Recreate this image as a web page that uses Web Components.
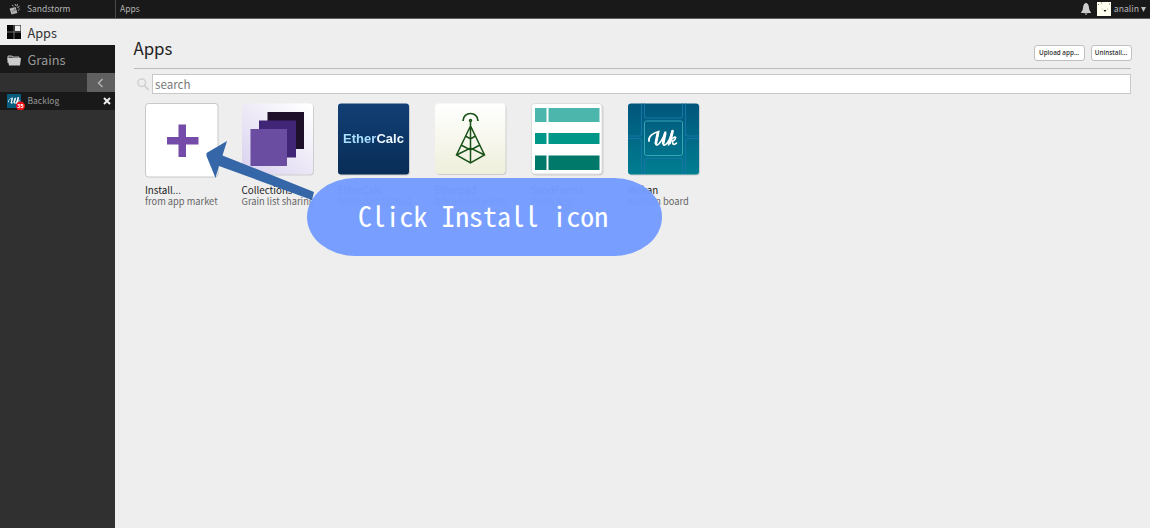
<!DOCTYPE html>
<html lang="en"><head><meta charset="utf-8"><title>Sandstorm</title>
<style>html,body{margin:0;height:100%;overflow:hidden}body{font-family:"Noto Sans CJK JP","Noto Sans",sans-serif;background:#eee}</style></head>
<body><sand-shell></sand-shell>
<script>
const define=(name,html)=>customElements.define(name,class extends HTMLElement{
 constructor(){super();const t=document.createElement('template');t.innerHTML=html;this.attachShadow({mode:'open'}).append(t.content.cloneNode(true));}
});
const wekan=`<path d="M1 12C0 8 5 3 11 2C10 7 6 16 9 16C12 16 17 6 18 2C16 8 14 17 17 16C20 15 24 7 25 1M25 1C24 6 21 12 21 16M21 15C23 9 29 6 28 9C28 11 25 12 24 12C26 12 24 18 29 14" stroke-width="1.700"/><path d="M10 4L8 14M17.500 4L15.500 14M25 2L22 14" stroke-width="2.800"/>`;
define('top-bar',`<style>
:host{display:flex;height:19px;box-sizing:border-box;background:#191919;border-bottom:1px solid #606060;color:#b3b3b3;font-size:8.500px;line-height:17px;flex:none}
.brand{width:116px;box-sizing:border-box;border-right:1px solid #4a4a4a;display:flex;padding-left:8.500px}
.brand svg{margin:4px 7.500px 0 0}.tab{flex:1;padding-left:4px}svg{flex:none;display:block}.user{display:flex;padding-right:4.500px}
</style><div class="brand"><svg width="11" height="11" viewBox="0 0 11 11"><path d="M.500 4.500L6.500 3l2 6L2.500 10.500Z" fill="#b0b0b0"/><path d="M3 1l1.500 1M6 0l1 2M8.500 0l-.500 2M10.500 2L9 3.500M10.500 5.500l-1.500 1M8 2.500l2 2" stroke="#aaa"/><path d="M3 8l3-2.500M5 5l2 1.500" stroke="#555" stroke-width=".7"/></svg><span>Sandstorm</span></div><div class="tab">Apps</div>
<div class="user"><svg width="10" height="12" viewBox="0 0 10 12" style="margin:3px 6px 0 0"><path d="M5 0C3.500 0 2 2 2 5C2 7 0 9 0 10H10C10 9 8 7 8 5C8 2 6.500 0 5 0M3.500 10.500Q5 13 6.500 10.500" fill="#ccc"/></svg><svg width="14" height="14" viewBox="0 0 14 14" style="margin:2px 3px 0 0"><path d="M0 0H14V14H0Z" fill="#fffff0"/><path d="M1 2.500h1M4 1h1M12 2h1" stroke="#776"/><path d="M5 7h1M10 7h1" stroke="#bba"/><path d="M6.500 8h3l-1.500 2Z" fill="#111"/></svg><span style="font-size:8.700px;line-height:18px">analin</span><svg width="5" height="6" viewBox="0 0 5 6" style="margin:7px 0 0 1.500px"><path d="M0 0H5L2.500 5Z" fill="#bbb"/></svg></div>`);
define('side-bar',`<style>
:host{display:flex;flex-direction:column;width:115px;flex:none;background:#303030;color:#999}
div{display:flex;box-sizing:border-box;flex:none}svg{display:block;flex:none}
.apps{height:26px;background:#eee;color:#333;font-size:12.700px;line-height:27px;padding-left:7px}
.grains{height:28px;background:#191919;font-size:12.800px;line-height:29px;padding-left:7px}
.tools{height:19px;justify-content:flex-end}.fold{width:28px;background:#606060;justify-content:center}
.log{height:18px;background:#191919;font-size:8.500px;line-height:17px;padding:0 4.500px 0 7px}
.log span{flex:1}
</style><div class="apps"><svg width="14" height="14" viewBox="0 0 14 14" style="margin:6px 6.500px 0 0"><path d="M0 0H14V14H0Z" fill="#080808"/><path d="M8 .500H13.500V6H8Z" fill="#eee"/><path d="M7 0V14M0 7H14" stroke="#888" stroke-width=".8"/></svg>Apps</div>
<div class="grains"><svg width="14" height="11" viewBox="0 0 14 11" style="margin:10px 6.500px 0 0"><path d="M1 8V1H5L6 2H12V4" fill="#555" stroke="#bbb"/><path d="M.300 3H14L13 10.500H2Z" fill="#ccc"/></svg><span>Grains</span></div>
<div class="tools"><div class="fold"><svg width="8" height="10" viewBox="0 0 8 10" style="margin-top:5px"><path d="M5.500 1L1.500 5L5.500 9" fill="none" stroke="#bbb" stroke-width="1.200"/></svg></div></div>
<div class="log"><svg width="18" height="18" viewBox="0 0 18 18" style="margin:0 2.500px 0 0"><path d="M0 2H14V16H0Z" fill="#075c7d"/><g transform="translate(1 5) scale(.41)" fill="none" stroke="#fff" stroke-linecap="round">${wekan}</g><circle cx="13.500" cy="14" r="4.500" fill="#f01018"/><text x="13.500" y="16" font-size="5.500" font-family="Noto Sans" font-weight="700" text-anchor="middle" fill="#fff">35</text></svg><span>Backlog</span><svg width="8" height="8" viewBox="0 0 8 8" style="margin-top:5px"><path d="M1 1L7 7M7 1L1 7" stroke="#eee" stroke-width="2"/></svg></div>`);
define('action-button',`<style>:host{display:flex;justify-content:center;box-sizing:border-box;height:16px;border:1px solid #c0c0c0;border-radius:3px;background:#fff;color:#333;font:600 6.300px/14px "Open Sans",sans-serif;white-space:nowrap}</style><slot></slot>`);
define('app-tile',`<style>
:host{display:block;width:96.500px;flex:none;line-height:11px;white-space:nowrap}
.art{height:81.500px}.name{font-size:9.800px;color:#222}.sub{font-size:9.300px;color:#666}
::slotted(svg){display:block;overflow:visible}
</style><div class="art"><slot name="art"></slot></div><div class="name"><slot name="name"></slot></div><div class="sub"><slot name="sub"></slot></div>`);
define('app-grid',`<style>:host{display:flex;padding:9.500px 0 0 11.500px}.tile{filter:drop-shadow(1.5px 1.5px .7px #0002)}</style>
<app-tile><svg slot="art" width="75" height="75"><rect x=".5" y=".5" width="72.500" height="73.500" rx="3" fill="#fff" stroke="#c8c8c8"/><path d="M33.500 21.500h7.500V34H53.500v7.500H41V54H33.500V41.500H22V34H33.500Z" fill="#744ba8"/></svg><span slot="name">Install...</span><span slot="sub">from app market</span></app-tile>
<app-tile><svg class="tile" slot="art" width="72" height="72"><defs><linearGradient id="c" x1="0" y1="1" x2=".9" y2="0"><stop stop-color="#d8d0ee"/><stop offset="1" stop-color="#fff"/></linearGradient></defs><rect y=".5" width="71" height="71" rx="4" fill="url(#c)"/><path d="M25.500 9H62V46H25.500Z" fill="#1e0f2b"/><path d="M17 17.500H54V54.500H17Z" fill="#412577"/><path d="M8.500 26H45V63H8.500Z" fill="#6a4ca1"/></svg><span slot="name">Collections</span><span slot="sub">Grain list sharing</span></app-tile>
<app-tile><svg class="tile" slot="art" width="72" height="72"><defs><linearGradient id="e" x2="0" y2="1"><stop stop-color="#123f75"/><stop offset="1" stop-color="#082d57"/></linearGradient></defs><rect y=".5" width="71" height="71" rx="3" fill="url(#e)"/><text x="35.500" y="39.500" text-anchor="middle" textLength="61" font-family="Liberation Sans" font-size="13" font-weight="700" fill="#eef8ff"><tspan fill="#a9dfff">Ether</tspan>Calc</text></svg><span slot="name">EtherCalc</span><span slot="sub">Multiuser Spread</span></app-tile>
<app-tile><svg class="tile" slot="art" width="72" height="72"><defs><linearGradient id="p" x2="0" y2="1"><stop stop-color="#fff"/><stop offset="1" stop-color="#efefdc"/></linearGradient></defs><rect y=".500" width="70.500" height="70.500" rx="4" fill="url(#p)"/><g fill="none" stroke="#195217" stroke-width="1.500"><path d="M28 18C28 8 43 8 43 18" stroke-width="1.700"/><circle cx="35.500" cy="17.500" r="1"/><path d="M35.500 19V60M35.500 23L21.500 52L35.500 60L49.500 52ZM30.500 33L35.500 36L40.500 33M26 42L35.500 47L45 42M21.500 52L35.500 45L49.500 52"/></g></svg><span slot="name">Etherpad</span><span slot="sub">Document editor</span></app-tile>
<app-tile><svg class="tile" slot="art" width="72" height="72"><rect x=".5" y=".5" width="70.500" height="70.500" rx="3" fill="#fff" stroke="#ddd"/><path d="M4 5H15.500V19H4ZM17.500 5H68.500V19H17.500Z" fill="#4db6ac"/><path d="M4 30H15.500V41H4ZM17.500 30H68.500V41H17.500Z" fill="#009688"/><path d="M4 52.500H15.500V67H4ZM17.500 52.500H68.500V67H17.500Z" fill="#00796b"/></svg><span slot="name">SandForms</span><span slot="sub">Form App</span></app-tile>
<app-tile><svg class="tile" slot="art" width="72" height="72"><defs><linearGradient id="w" x2="0" y2="1"><stop stop-color="#01557b"/><stop offset="1" stop-color="#007e91"/></linearGradient></defs><rect y=".5" width="71" height="71" rx="3" fill="url(#w)"/><path d="M13.500 .5V31Q13.500 33 11 33H0M16.500 .5V13Q16.500 15 19 15H52Q54.500 15 54.500 13V.5M57.500 .5V31Q57.500 33 60 33H71M0 35.500H11Q13.500 35.500 13.500 38V71M16.500 71V58Q16.500 55.500 19 55.500H52Q54.500 55.500 54.500 58V71M57.500 71V38Q57.500 35.500 60 35.500H71" fill="none" stroke="#1675a5" stroke-width="1.100"/><rect x="16.500" y="18" width="38" height="34.500" rx="2" fill="none" stroke="#38a4b5"/><g transform="translate(20 26.500) scale(.98 .97)" fill="none" stroke="#fff" stroke-linecap="round">${wekan}</g></svg><span slot="name">Wekan</span><span slot="sub">Kanban board</span></app-tile>`);
define('apps-page',`<style>
:host{display:block;flex:1;min-width:0;padding:13px 19px 0 18.500px}
header{display:flex;align-items:flex-start;height:36.500px;box-sizing:border-box;border-bottom:1px solid #bbb}
h1{font-size:16.800px;line-height:33px;font-weight:400;margin:0;flex:1;color:#222}
.search{display:flex;padding:5px 0 0 3px}.search svg{margin:4px 3px 0 0;flex:none}.field{flex:1;height:20px;box-sizing:border-box;border:1.500px solid #c8c8c8;background:#fff;color:#777;font-size:11.600px;line-height:18px;padding-left:2.500px}
</style><header><h1>Apps</h1><action-button style="width:51px;margin:13px 6px 0 0">Upload app...</action-button><action-button style="width:41px;margin:13px -.500px 0 0">Uninstall...</action-button></header><div class="search"><svg width="12" height="13" viewBox="0 0 12 13"><circle cx="4.700" cy="4.700" r="3.800" fill="none" stroke="#ccc" stroke-width="1.300"/><path d="M7.500 7.500L11.500 12" stroke="#ccc" stroke-width="1.600"/></svg><div class="field">search</div></div><app-grid></app-grid>`);
define('hint-callout',`<style>
:host{position:absolute;left:200px;top:135px;width:463px;height:122px}
svg{position:absolute;inset:0}.bubble{position:absolute;left:107px;top:43px;width:355px;height:77.500px;border-radius:48px / 39px;background:rgba(116,156,255,.97);color:#fff;font:27.800px/75px "Noto Sans Mono CJK JP","Noto Sans Mono CJK SC","Liberation Mono",monospace;text-align:center;white-space:pre;text-indent:-3px}
</style><svg width="130" height="75"><path d="M6.500 21V18L27 6L22.500 20.500L114 57L112 65L19 31L15.500 43Z" fill="#3566a7" style="filter:blur(.7px)"/></svg><div class="bubble">Click Install icon</div>`);
define('sand-shell',`<style>:host{display:flex;flex-direction:column;height:528px;position:relative;overflow:hidden}.body{display:flex;flex:1}</style><top-bar></top-bar><div class="body"><side-bar></side-bar><apps-page></apps-page></div><hint-callout></hint-callout>`);
</script></body></html>
